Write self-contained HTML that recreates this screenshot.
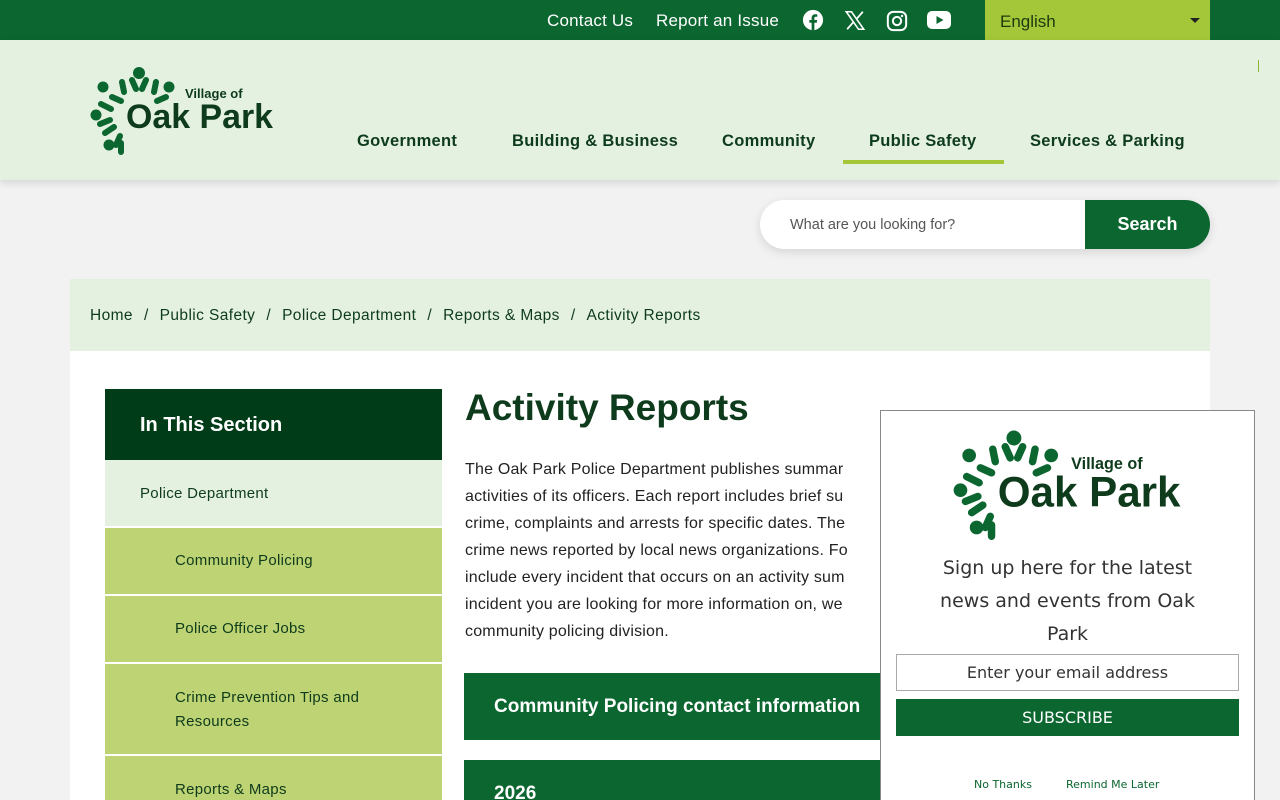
<!DOCTYPE html>
<html><head><style>
*{margin:0;padding:0;box-sizing:border-box}
html,body{width:1280px;height:800px;overflow:hidden}
body{background:#f2f2f2;font-family:"Liberation Sans",sans-serif;position:relative}
.top{position:absolute;left:0;top:0;width:1280px;height:40px;background:#0b6630}
.top a{position:absolute;top:11px;color:#fff;font-size:17px;letter-spacing:.2px}
.lang{position:absolute;left:985px;top:0;width:225px;height:40px;background:#a4c639;color:#1c3a10;font-size:17px;padding:12px 15px}
.lang:after{content:"";position:absolute;right:10px;top:18px;border:5px solid transparent;border-top-color:#222}
.hdr{position:absolute;left:0;top:40px;width:1280px;height:140px;background:#e5f1e0;box-shadow:0 3px 8px rgba(0,0,0,.12)}
.nav{position:absolute;top:132px;font-weight:bold;font-size:16.5px;color:#0d3b1c;letter-spacing:.3px}
.search{position:absolute;left:760px;top:200px;width:450px;height:49px;background:#fff;border-radius:25px;box-shadow:0 3px 10px rgba(0,0,0,.12)}
.search span{position:absolute;left:30px;top:17px;font-size:14.5px;color:#555}
.search b{position:absolute;right:0;top:0;width:125px;height:49px;background:#0b6630;border-radius:0 25px 25px 0;color:#fff;font-size:18px;text-align:center;line-height:49px}
.bc{position:absolute;left:70px;top:279px;width:1140px;height:72px;background:#e5f1e0;font-size:15.5px;color:#0d3b1c;padding:28px 20px;letter-spacing:.4px}
.bc i{font-style:normal;margin:0 11px}
.main{position:absolute;left:70px;top:351px;width:1140px;height:449px;background:#fff}
.side{position:absolute;left:105px;width:337px}
.sh{top:389px;height:71px;background:#003c17;color:#fff;font-weight:bold;font-size:20px;padding:25px 35px}
.si{font-size:15px;color:#0d3b1c;line-height:24px;letter-spacing:.3px}
h1{position:absolute;left:465px;top:387px;font-size:37px;color:#0d3b1c}
.p{position:absolute;left:465px;top:456px;width:420px;font-size:16px;line-height:27px;color:#222;white-space:nowrap;letter-spacing:.2px}
.acc{position:absolute;left:464px;width:440px;background:#0b6630;color:#fff;font-weight:bold;font-size:19px;padding:23px 30px;white-space:nowrap}
.pop{position:absolute;left:880px;top:410px;width:375px;height:400px;background:#fff;border:1px solid #888;font-family:"DejaVu Sans",sans-serif}
</style></head><body>
<div class="top">
<a style="left:547px">Contact Us</a><a style="left:656px">Report an Issue</a>
<svg style="position:absolute;left:802px;top:9px" width="22" height="22" viewBox="0 0 24 24"><circle cx="12" cy="12" r="11" fill="#fff"/><path d="M13.5 23v-8h2.6l.4-3h-3v-2c0-.9.3-1.5 1.6-1.5h1.6V5.8c-.3 0-1.2-.1-2.3-.1-2.3 0-3.9 1.4-3.9 4V12H8v3h2.5v8z" fill="#0b6630"/></svg>
<svg style="position:absolute;left:844px;top:10px" width="22" height="21" viewBox="0 0 24 24"><path d="M2 2h6l14 20h-6z" fill="none" stroke="#fff" stroke-width="1.8"/><path d="M3 22 10.5 13.5M21 2l-7.5 8.5" stroke="#fff" stroke-width="2"/></svg>
<svg style="position:absolute;left:886px;top:10px" width="22" height="22" viewBox="0 0 24 24"><rect x="2" y="2" width="20" height="20" rx="6" fill="none" stroke="#fff" stroke-width="2.2"/><circle cx="12" cy="12" r="4.5" fill="none" stroke="#fff" stroke-width="2.2"/><circle cx="17.5" cy="6.5" r="1.3" fill="#fff"/></svg>
<svg style="position:absolute;left:927px;top:11px" width="24" height="18" viewBox="0 0 24 18"><rect x="0" y="0" width="24" height="18" rx="5" fill="#fff"/><path d="M9.5 5v8l7-4z" fill="#0b6630"/></svg>
<div class="lang">English</div>
</div>
<div class="hdr">
<div style="position:absolute;left:1258px;top:20px;width:1px;height:12px;background:#8ab832"></div>
</div>
<svg style="position:absolute;left:90px;top:65px" width="185" height="90" viewBox="0 0 185 90" id="lg">
<g fill="#0b6630" stroke="#0b6630" stroke-width="6" stroke-linecap="round">
<circle cx="49" cy="8" r="6" stroke="none"/><circle cx="13" cy="22" r="5.5" stroke="none"/><circle cx="79" cy="22" r="5.5" stroke="none"/><circle cx="6" cy="50" r="5.5" stroke="none"/><circle cx="19" cy="80" r="5.5" stroke="none"/>
<path d="M42 15l4 9M56 15l-4 9M32 17l2 10M66 17l-2 10M22 32l9 4M76 32l-9 4M11 39l10 5M10 59l10-4M15 68l9-6M30 71l-4 9M31 78l0 9" fill="none"/>
</g>
<text x="95" y="33" font-family="Liberation Sans" font-weight="bold" font-size="13" fill="#0d3b1c">Village of</text>
<text x="36" y="63" font-family="Liberation Sans" font-weight="bold" font-size="34" fill="#0d3b1c" textLength="147" lengthAdjust="spacingAndGlyphs">Oak Park</text>
</svg>
<div class="nav" style="left:357px">Government</div>
<div class="nav" style="left:512px">Building &amp; Business</div>
<div class="nav" style="left:722px">Community</div>
<div class="nav" style="left:869px">Public Safety</div>
<div style="position:absolute;left:843px;top:160px;width:161px;height:4px;background:#a4c639"></div>
<div class="nav" style="left:1030px">Services &amp; Parking</div>
<div class="search"><span>What are you looking for?</span><b>Search</b></div>
<div class="bc">Home<i>/</i>Public Safety<i>/</i>Police Department<i>/</i>Reports &amp; Maps<i>/</i>Activity Reports</div>
<div class="main"></div>
<div class="side sh">In This Section</div>
<div class="side si" style="top:460px;height:66px;background:#e5f1e0;padding:22px 35px">Police Department</div>
<div class="side si" style="top:528px;height:66px;background:#bed373;padding:21px 70px">Community Policing</div>
<div class="side si" style="top:596px;height:66px;background:#bed373;padding:21px 70px">Police Officer Jobs</div>
<div class="side si" style="top:664px;height:90px;background:#bed373;padding:22px 70px">Crime Prevention Tips and Resources</div>
<div class="side si" style="top:756px;height:60px;background:#bed373;padding:22px 70px">Reports &amp; Maps</div>
<h1>Activity Reports</h1>
<div class="p">The Oak Park Police Department publishes summar<br>activities of its officers. Each report includes brief su<br>crime, complaints and arrests for specific dates. The<br>crime news reported by local news organizations. Fo<br>include every incident that occurs on an activity sum<br>incident you are looking for more information on, we<br>community policing division.</div>
<div class="acc" style="top:673px;height:67px">Community Policing contact information</div>
<div class="acc" style="top:760px;height:60px">2026</div>
<div class="pop">
<svg style="position:absolute;left:72px;top:17px" width="230" height="112" viewBox="0 0 185 90"><use href="#lg"/></svg>
<div style="position:absolute;left:0;width:373px;top:141px;text-align:center;font-size:19px;line-height:33px;color:#333">Sign up here for the latest<br>news and events from Oak<br>Park</div>
<div style="position:absolute;left:15px;top:243px;width:343px;height:37px;border:1px solid #aaa;text-align:center;font-size:16px;line-height:35px;color:#333">Enter your email address</div>
<div style="position:absolute;left:15px;top:288px;width:343px;height:37px;background:#0b6630;text-align:center;font-size:16px;line-height:37px;color:#fff">SUBSCRIBE</div>
<div style="position:absolute;left:93px;top:367px;font-size:11px;color:#0b6630">No Thanks</div>
<div style="position:absolute;left:185px;top:367px;font-size:11px;color:#0b6630">Remind Me Later</div>
</div>
</body></html>
